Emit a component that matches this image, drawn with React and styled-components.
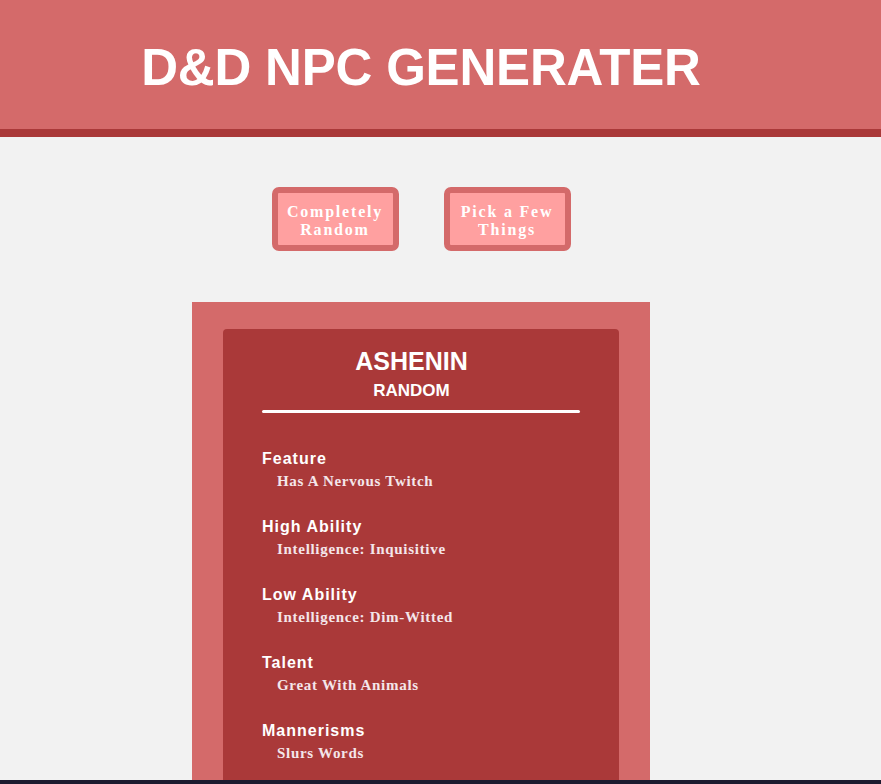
import { createGlobalStyle } from "styled-components";
import styled from "styled-components";

const GlobalStyle = createGlobalStyle`
    * {
        box-sizing: border-box;
    }
    html, body {
        margin: 0;
        padding: 0;
        background-color: #f2f2f2;
        font-family: "Liberation Sans", Arial, sans-serif;
    }
`;

const StHeader = styled.header`
    height: 137px;
    padding-top: 43px;
    background-color: #d46a6a;
    border-bottom: 8px solid #aa3939;
`;
const StTitle = styled.h1`
    width: 842px;
    margin: 0;
    color: #fff;
    font-size: 51px;
    line-height: 50px;
    font-weight: 700;
    letter-spacing: -0.2px;
    text-align: center;
`;
const StMain = styled.main`
    width: 842px;
    padding-top: 50px;
    display: flex;
    flex-direction: column;
    align-items: center;
`;
const StButtons = styled.div`
    display: flex;
    gap: 45px;
    margin-bottom: 51px;
`;
const StButton = styled.button`
    width: 127px;
    height: 64px;
    padding: 3px 6px 0;
    border: 6px solid #d46a6a;
    border-radius: 7px;
    background-color: #ffa0a0;
    color: #fff;
    font-family: "Liberation Serif", "Times New Roman", serif;
    font-size: 16px;
    line-height: 18px;
    font-weight: 700;
    letter-spacing: 1.8px;
    cursor: pointer;
`;
const StFrame = styled.section`
    width: 458px;
    padding: 27px 31px 0;
    background-color: #d46a6a;
`;
const StCard = styled.div`
    padding: 18px 39px 0;
    border-radius: 4px 4px 0 0;
    background-color: #aa3939;
    color: #fff;
`;
const StName = styled.h2`
    margin: 0;
    padding-right: 19px;
    font-size: 25px;
    line-height: 29px;
    text-align: center;
`;
const StKind = styled.h3`
    margin: 5px 0 0;
    padding-right: 19px;
    font-size: 17px;
    line-height: 20px;
    text-align: center;
`;
const StRule = styled.hr`
    height: 3px;
    margin: 9px 0 0;
    border: none;
    border-radius: 2px;
    background-color: #fff;
`;
const StList = styled.dl`
    margin: 36px 0 0;
    padding-bottom: 60px;
`;
const StItem = styled.div`
    margin-bottom: 27px;
`;
const StLabel = styled.dt`
    font-size: 16px;
    line-height: 19px;
    font-weight: 700;
    letter-spacing: 1px;
`;
const StValue = styled.dd`
    margin: 4px 0 0 15px;
    color: #f4e6ea;
    font-family: "Liberation Serif", "Times New Roman", serif;
    font-size: 15px;
    line-height: 18px;
    font-weight: 700;
    letter-spacing: 0.7px;
`;
const StBottomEdge = styled.div`
    position: fixed;
    left: 0;
    right: 0;
    bottom: 0;
    height: 4px;
    background-color: #1c1b2f;
`;

const traits = [
    { title: "Feature", description: "Has A Nervous Twitch" },
    { title: "High Ability", description: "Intelligence: Inquisitive" },
    { title: "Low Ability", description: "Intelligence: Dim-Witted" },
    { title: "Talent", description: "Great With Animals" },
    { title: "Mannerisms", description: "Slurs Words" },
];

export default function App() {
    return (
        <>
            <GlobalStyle />
            <StHeader>
                <StTitle>D&amp;D NPC GENERATER</StTitle>
            </StHeader>
            <StMain>
                <StButtons>
                    <StButton>Completely Random</StButton>
                    <StButton>Pick a Few Things</StButton>
                </StButtons>
                <StFrame>
                    <StCard>
                        <StName>ASHENIN</StName>
                        <StKind>RANDOM</StKind>
                        <StRule />
                        <StList>
                            {traits.map((el) => (
                                <StItem key={el.title}>
                                    <StLabel>{el.title}</StLabel>
                                    <StValue>{el.description}</StValue>
                                </StItem>
                            ))}
                        </StList>
                    </StCard>
                </StFrame>
            </StMain>
            <StBottomEdge />
        </>
    );
}
